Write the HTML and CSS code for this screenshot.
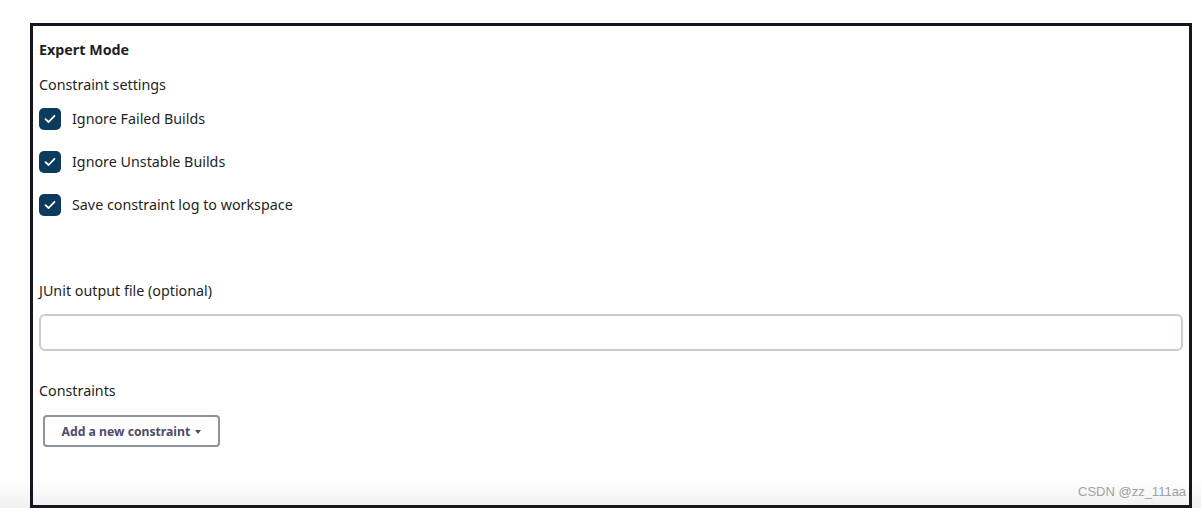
FILE: index.html
```html
<!DOCTYPE html>
<html lang="en">
<head>
    <meta charset="UTF-8">
    <title>Expert Mode</title>
    <link rel="stylesheet" href="styles.css">
</head>
<body>
    <main class="frame">
        <b class="title">Expert Mode</b>
        <div class="section">Constraint settings</div>
        <label class="check"><span class="box"><svg width="12" height="10" viewBox="0 0 12 10"><path d="M1.5 5.2 L4.6 8 L10.5 1.8" fill="none" stroke="#fff" stroke-width="1.8" stroke-linecap="round" stroke-linejoin="round"/></svg></span>Ignore Failed Builds</label>
        <label class="check"><span class="box"><svg width="12" height="10" viewBox="0 0 12 10"><path d="M1.5 5.2 L4.6 8 L10.5 1.8" fill="none" stroke="#fff" stroke-width="1.8" stroke-linecap="round" stroke-linejoin="round"/></svg></span>Ignore Unstable Builds</label>
        <label class="check"><span class="box"><svg width="12" height="10" viewBox="0 0 12 10"><path d="M1.5 5.2 L4.6 8 L10.5 1.8" fill="none" stroke="#fff" stroke-width="1.8" stroke-linecap="round" stroke-linejoin="round"/></svg></span>Save constraint log to workspace</label>

        <div class="field-label">JUnit output file (optional)</div>
        <input class="text-input" type="text">

        <div class="field-label constraints">Constraints</div>
        <button class="add-btn" type="button">Add a new constraint <span class="caret"></span></button>
    </main>
    <div class="mark">CSDN @zz_111aa</div>
</body>
</html>
```

FILE: styles.css
```css
html {
    background: #fff;
}
body {
    margin: 0;
    height: 508px;
    overflow: hidden;
    background: linear-gradient(to bottom, #fff 0, #fff 478px, #f1f1f1 508px);
    font-family: "Noto Sans", "Open Sans", sans-serif;
    font-size: 14.3px;
    color: #1f1f24;
}
.frame {
    box-sizing: border-box;
    height: 485px;
    margin: 23px 9px 0 30px;
    border: 3px solid #17161f;
    padding: 14px 6px 0 6px;
    display: flex;
    flex-direction: column;
    align-items: flex-start;
}
.title {
    font-size: 14.3px;
    line-height: 20px;
}
.section {
    margin-top: 15px;
    line-height: 20px;
}
.check {
    display: flex;
    align-items: center;
    gap: 11px;
    margin-top: 13px;
    line-height: 22px;
}
.check + .check {
    margin-top: 21px;
}
.box {
    width: 22px;
    height: 22px;
    border-radius: 5px;
    background: #0d3b5e;
    display: flex;
    align-items: center;
    justify-content: center;
}
.field-label {
    margin-top: 65px;
    line-height: 20px;
}
.text-input {
    box-sizing: border-box;
    width: 100%;
    height: 37px;
    margin-top: 13px;
    border: 2px solid #c6ced1;
    border-radius: 6px;
    outline: none;
    background: #fff;
}
.constraints {
    margin-top: 30px;
}
.add-btn {
    margin: 14px 0 0 4px;
    height: 32px;
    width: 177px;
    background: #fff;
    border: 2px solid #8d949a;
    border-radius: 4px;
    font-family: "Noto Sans", "Open Sans", sans-serif;
    font-size: 12.2px;
    font-weight: bold;
    color: #4d4c68;
    padding: 0;
}
.caret {
    display: inline-block;
    margin-left: 2px;
    vertical-align: middle;
    border-left: 3.5px solid transparent;
    border-right: 3.5px solid transparent;
    border-top: 4px solid #4d4c68;
}
.mark {
    position: absolute;
    left: 1078px;
    top: 484px;
    font-family: "Liberation Sans", sans-serif;
    font-size: 13px;
    color: #a0a0a0;
}
```
